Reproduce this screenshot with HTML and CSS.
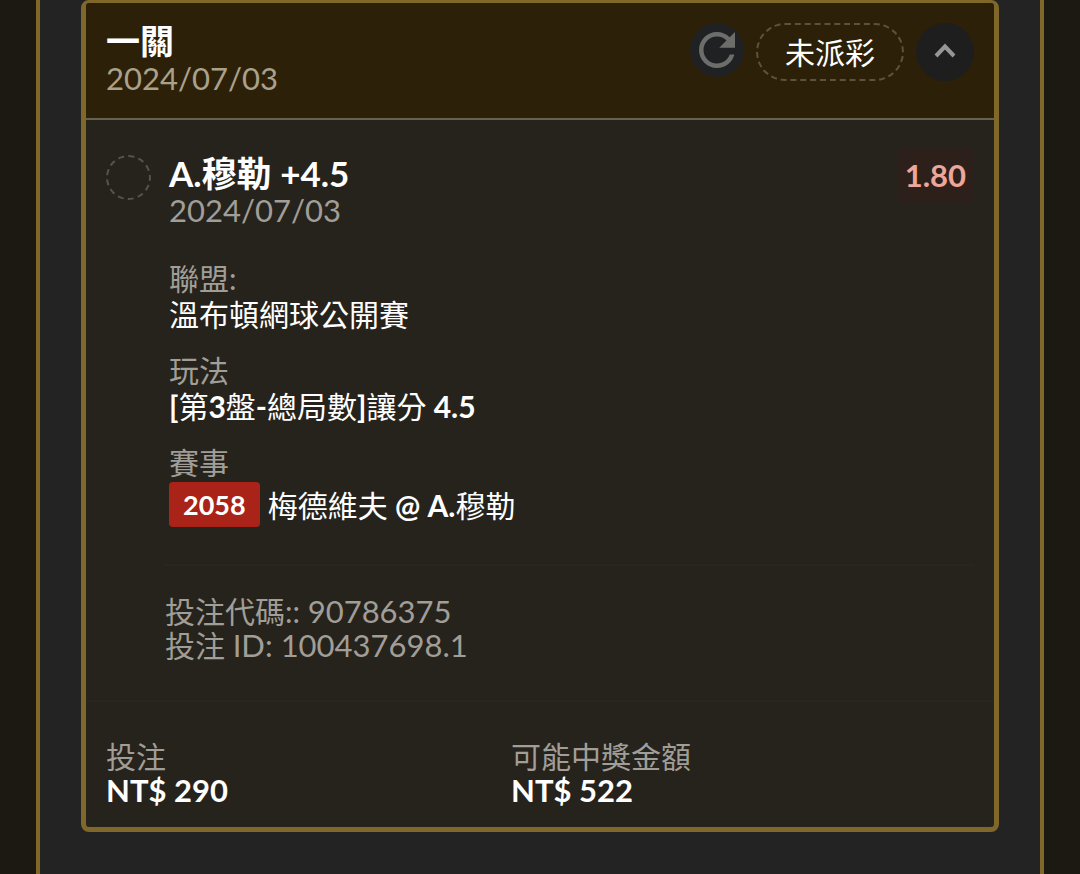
FILE: index.html
```
<!DOCTYPE html>
<html lang="zh-Hant">
<head>
  <meta charset="UTF-8">
  <meta name="viewport" content="width=device-width, initial-scale=1.0">
  <title>投注紀錄</title>
  <link rel="stylesheet" href="styles.css">
</head>
<body>
  <main class="panel">
    <article class="bet-card">
      <header class="bet-header">
        <div class="bet-heading">
          <h1 class="title">一關</h1>
          <time class="date" datetime="2024-07-03">2024/07/03</time>
        </div>
        <div class="actions">
          <button class="refresh" type="button" aria-label="重新整理">
            <svg viewBox="0 0 24 24" width="54" height="54">
              <path d="M17.650 6.350C16.200 4.900 14.210 4 12 4c-4.420 0-7.990 3.580-7.990 8s3.570 8 7.990 8c3.730 0 6.840-2.550 7.730-6h-2.080c-.820 2.330-3.040 4-5.650 4-3.310 0-6-2.690-6-6s2.690-6 6-6c1.660 0 3.140.690 4.220 1.780L13 11h7V4z" fill="#6d6d6c"/>
            </svg>
          </button>
          <span class="status">未派彩</span>
          <button class="toggle" type="button" aria-label="收合">
            <svg viewBox="0 0 58 58" width="58" height="58">
              <path d="M20 33l9-9.500 9 9.500" fill="none" stroke="#969696" stroke-width="4"/>
            </svg>
          </button>
        </div>
      </header>

      <section class="selection">
        <span class="marker"></span>
        <div class="selection-body">
          <div class="pick-row">
            <div>
              <h2 class="title pick">A.穆勒 +4.5</h2>
              <time class="date" datetime="2024-07-03">2024/07/03</time>
            </div>
            <span class="odds">1.80</span>
          </div>
          <dl class="details">
            <div class="detail">
              <dt>聯盟:</dt>
              <dd>溫布頓網球公開賽</dd>
            </div>
            <div class="detail">
              <dt>玩法</dt>
              <dd><b>[</b>第<b>3</b>盤<b>-</b>總局數<b>]</b>讓分<b> 4.5</b></dd>
            </div>
            <div class="detail">
              <dt>賽事</dt>
              <dd class="match"><span class="match-id">2058</span><span>梅德維夫<b> @ A.</b>穆勒</span></dd>
            </div>
          </dl>
          <div class="codes">
            <p>投注代碼:: <span class="number">90786375</span></p>
            <p>投注 <span class="number">ID: 100437698.1</span></p>
          </div>
        </div>
      </section>

      <footer class="totals">
        <div>
          <p class="label">投注</p>
          <p class="amount">NT$ 290</p>
        </div>
        <div>
          <p class="label">可能中獎金額</p>
          <p class="amount">NT$ 522</p>
        </div>
      </footer>
    </article>
  </main>
</body>
</html>
```
FILE: styles.css
```
* {
  box-sizing: border-box;
}
html, body {
  margin: 0;
  padding: 0;
}
body {
  min-height: 100vh;
  display: flex;
  padding: 0 36px;
  background: #1c1912;
  color: #fff;
  font-family: Lato, "Noto Sans CJK TC", sans-serif;
  font-size: 30px;
  line-height: 34px;
}
h1, h2, p, dl, dd {
  margin: 0;
}
.panel {
  flex: 1;
  padding: 0 41px 40px;
  background: #232323;
  border: solid #80672a;
  border-width: 0 4px;
}
.bet-card {
  background: #26231d;
  border: 5px solid #80672a;
  border-top-width: 3px;
  border-radius: 8px;
}
.bet-header {
  display: flex;
  justify-content: space-between;
  align-items: flex-start;
  min-height: 117px;
  padding: 20px;
  background: #2c2108;
  border-bottom: 2px solid #68614f;
  border-radius: 3px 3px 0 0;
}
.title {
  font-size: 34px;
  font-weight: bold;
  line-height: 36px;
}
.pick {
  font-size: 35px;
}
.date {
  display: block;
  font-size: 31px;
  line-height: 38px;
  color: #a19e98;
}
.bet-header .date {
  color: #aaa18c;
}
.actions {
  display: flex;
  align-items: flex-start;
  gap: 12px;
}
.refresh, .toggle {
  padding: 0;
  border: none;
  border-radius: 50%;
  cursor: pointer;
}
.refresh {
  width: 54px;
  height: 54px;
  background: #202123;
}
.toggle {
  width: 58px;
  height: 58px;
  background: #1e1e1f;
}
.refresh svg, .toggle svg {
  display: block;
}
.status {
  padding: 0 27px;
  border: 2px dashed #5d533d;
  border-radius: 29px;
  line-height: 54px;
}
.selection {
  display: flex;
  gap: 18px;
  padding: 35px 20px 0;
}
.marker {
  flex: none;
  width: 45px;
  height: 45px;
  border: 2px dashed #55534e;
  border-radius: 50%;
}
.selection-body {
  flex: 1;
}
.pick-row {
  display: flex;
  justify-content: space-between;
  align-items: flex-start;
}
/* the tint reaches a little above and below the title line */
.odds {
  margin: -8px 0;
  padding: 8px;
  background: #2d201b;
  border-radius: 4px;
  color: #eda79a;
  font-size: 31px;
  font-weight: bold;
  line-height: 40px;
}
.details {
  display: grid;
  gap: 20px;
  padding: 31px 0 37px;
}
.detail {
  line-height: 36px;
}
.detail dt {
  color: #a19e98;
}
.match {
  display: flex;
  align-items: center;
  gap: 8px;
  padding-top: 2px;
}
.match-id {
  padding: 0 14px;
  background: #a92318;
  border-radius: 4px;
  font-size: 27px;
  font-weight: bold;
  line-height: 45px;
}
.codes {
  margin-left: -4px;
  padding: 28px 0 38px;
  border-top: 2px solid #292620;
  color: #a19e98;
}
.number {
  font-size: 31px;
}
.totals {
  display: grid;
  grid-template-columns: 405px 1fr;
  padding: 37px 20px 20px;
  border-top: 2px solid #292620;
}
.label {
  color: #a19e98;
}
.amount {
  font-size: 31px;
  font-weight: bold;
}
```
